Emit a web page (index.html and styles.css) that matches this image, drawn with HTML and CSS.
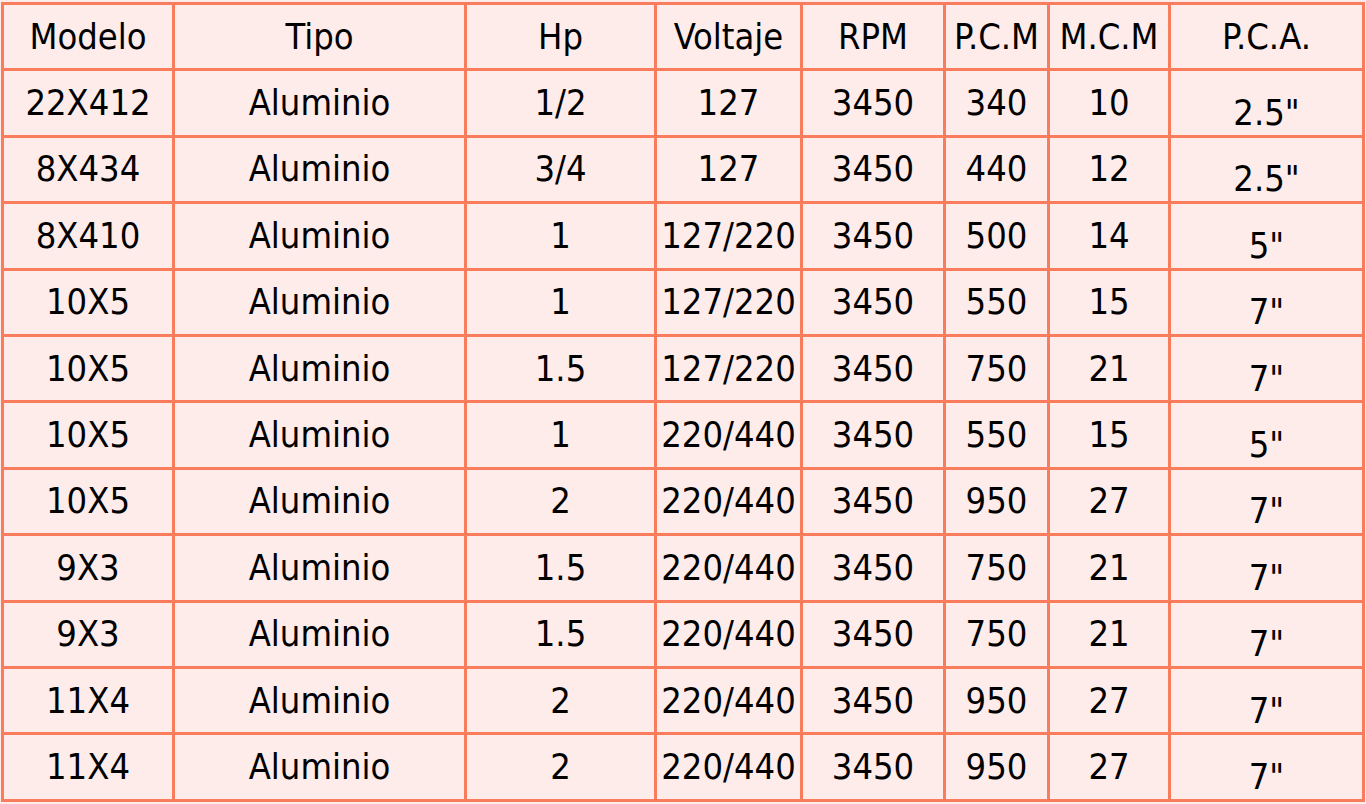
FILE: index.html
```html
<!DOCTYPE html>
<html lang="es">
<head>
<meta charset="utf-8">
<title>Tabla de motores</title>
<link rel="stylesheet" href="styles.css">
</head>
<body>
<table class="specs">
  <colgroup>
    <col class="c-modelo"><col class="c-tipo"><col class="c-hp"><col class="c-volt">
    <col class="c-rpm"><col class="c-pcm"><col class="c-mcm"><col class="c-pca">
  </colgroup>
  <thead>
    <tr><th>Modelo</th><th>Tipo</th><th>Hp</th><th>Voltaje</th><th>RPM</th><th>P.C.M</th><th>M.C.M</th><th>P.C.A.</th></tr>
  </thead>
  <tbody>
    <tr><td>22X412</td><td>Aluminio</td><td>1/2</td><td>127</td><td>3450</td><td>340</td><td>10</td><td class="pca">2.5"</td></tr>
    <tr><td>8X434</td><td>Aluminio</td><td>3/4</td><td>127</td><td>3450</td><td>440</td><td>12</td><td class="pca">2.5"</td></tr>
    <tr><td>8X410</td><td>Aluminio</td><td>1</td><td>127/220</td><td>3450</td><td>500</td><td>14</td><td class="pca">5"</td></tr>
    <tr><td>10X5</td><td>Aluminio</td><td>1</td><td>127/220</td><td>3450</td><td>550</td><td>15</td><td class="pca">7"</td></tr>
    <tr><td>10X5</td><td>Aluminio</td><td>1.5</td><td>127/220</td><td>3450</td><td>750</td><td>21</td><td class="pca">7"</td></tr>
    <tr><td>10X5</td><td>Aluminio</td><td>1</td><td>220/440</td><td>3450</td><td>550</td><td>15</td><td class="pca">5"</td></tr>
    <tr><td>10X5</td><td>Aluminio</td><td>2</td><td>220/440</td><td>3450</td><td>950</td><td>27</td><td class="pca">7"</td></tr>
    <tr><td>9X3</td><td>Aluminio</td><td>1.5</td><td>220/440</td><td>3450</td><td>750</td><td>21</td><td class="pca">7"</td></tr>
    <tr><td>9X3</td><td>Aluminio</td><td>1.5</td><td>220/440</td><td>3450</td><td>750</td><td>21</td><td class="pca">7"</td></tr>
    <tr><td>11X4</td><td>Aluminio</td><td>2</td><td>220/440</td><td>3450</td><td>950</td><td>27</td><td class="pca">7"</td></tr>
    <tr><td>11X4</td><td>Aluminio</td><td>2</td><td>220/440</td><td>3450</td><td>950</td><td>27</td><td class="pca">7"</td></tr>
  </tbody>
</table>
</body>
</html>
```
FILE: styles.css
```css
html, body {
  margin: 0;
  padding: 0;
  background: #fdecea;
}
body {
  padding: 2px 0 0 1px;
  font-family: "DejaVu Sans Condensed", "DejaVu Sans", sans-serif;
  color: #000;
}
.specs {
  border-collapse: collapse;
  table-layout: fixed;
  width: 1364px;
  background: #fdecea;
  border: 3px solid #f97c5c;
}
.specs th,
.specs td {
  border: 3px solid #f97c5c;
  height: 66.4px;
  padding: 0;
  text-align: center;
  vertical-align: middle;
  font-size: 36px;
  font-weight: normal;
  line-height: 1;
  white-space: nowrap;
  box-sizing: border-box;
}
.specs td.pca {
  padding-top: 20px;
}
.c-modelo { width: 171px; }
.c-tipo { width: 292px; }
.c-hp { width: 190px; }
.c-volt { width: 146px; }
.c-rpm { width: 143px; }
.c-pcm { width: 104px; }
.c-mcm { width: 121px; }
.c-pca { width: 194px; }
```
